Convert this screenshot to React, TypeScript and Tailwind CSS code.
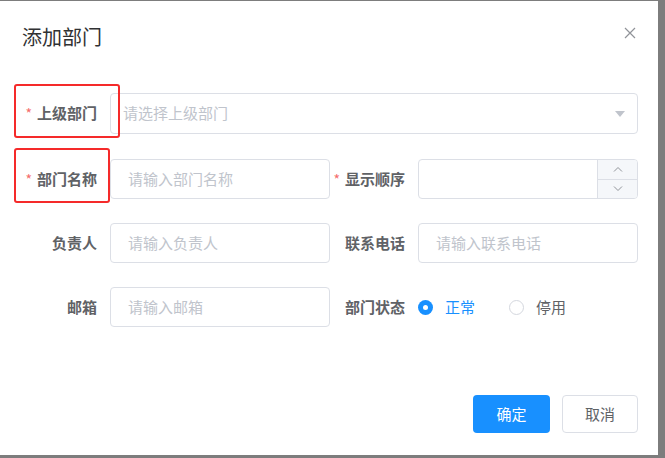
import React from 'react'

const font = { fontFamily: '"Noto Sans CJK SC", "Noto Sans", sans-serif' }

type LabelProps = {
  text: string
  required?: boolean
  className?: string
}

const Label = ({ text, required, className }: LabelProps) => (
  <div className={`flex items-center justify-end pr-[13px] text-[15px] font-bold text-[#606266] ${className ?? ''}`}>
    {required && <span className="mr-[5px] text-[14px] font-normal text-[#f56c6c]">*</span>}
    {text}
  </div>
)

const TextInput = ({ placeholder }: { placeholder: string }) => (
  <div className="flex h-[40px] w-[220px] items-center rounded-[4px] border border-[#dcdfe6] bg-white pl-[17px] text-[15px] text-[#c0c4cc]">
    {placeholder}
  </div>
)

const Radio = ({ label, checked }: { label: string; checked?: boolean }) => (
  <div className="flex items-center">
    {checked ? (
      <span className="flex h-[15px] w-[15px] items-center justify-center rounded-full bg-[#1890ff]">
        <span className="h-[5px] w-[5px] rounded-full bg-white" />
      </span>
    ) : (
      <span className="h-[15px] w-[15px] rounded-full border border-[#d4d7de] bg-white" />
    )}
    <span className={`ml-[12px] text-[15px] ${checked ? 'text-[#1890ff]' : 'text-[#606266]'}`}>{label}</span>
  </div>
)

export default function App() {
  return (
    <div className="h-[458px] w-[665px] overflow-hidden bg-[#7d7d7d] pt-px" style={font}>
      <div className="relative flex h-[454px] w-[658px] flex-col bg-white">
        <div className="flex h-[72px] items-center justify-between pl-[22px] pr-[22px]">
          <span className="text-[20px] text-[#303133]">添加部门</span>
          <svg width="12" height="12" viewBox="0 0 12 12" className="mb-[8px]">
            <path d="M1 1 L11 11 M11 1 L1 11" stroke="#909399" strokeWidth="1.2" fill="none" />
          </svg>
        </div>

        <div className="mt-[20px] flex flex-col">
          <div className="flex h-[41px]">
            <Label text="上级部门" required className="w-[110px]" />
            <div className="flex w-[528px] items-center justify-between rounded-[4px] border border-[#dcdfe6] pl-[12px] pr-[12px] text-[15px] text-[#c0c4cc]">
              请选择上级部门
              <svg width="10" height="6" viewBox="0 0 10 6">
                <path d="M0 0 L10 0 L5 6 Z" fill="#c0c4cc" />
              </svg>
            </div>
          </div>

          <div className="mt-[25px] flex h-[40px]">
            <Label text="部门名称" required className="w-[110px]" />
            <TextInput placeholder="请输入部门名称" />
            <Label text="显示顺序" required className="w-[88px]" />
            <div className="flex w-[220px] overflow-hidden rounded-[4px] border border-[#dcdfe6]">
              <div className="flex-1" />
              <div className="flex w-[40px] flex-col border-l border-[#dcdfe6] bg-[#f5f7fa]">
                <div className="flex flex-1 items-center justify-center border-b border-[#dcdfe6]">
                  <svg width="10" height="6" viewBox="0 0 10 6">
                    <path d="M1 5.5 L5 1.5 L9 5.5" stroke="#909399" strokeWidth="1" fill="none" />
                  </svg>
                </div>
                <div className="flex flex-1 items-center justify-center">
                  <svg width="10" height="6" viewBox="0 0 10 6">
                    <path d="M1 0.5 L5 4.5 L9 0.5" stroke="#909399" strokeWidth="1" fill="none" />
                  </svg>
                </div>
              </div>
            </div>
          </div>

          <div className="mt-[24px] flex h-[40px]">
            <Label text="负责人" className="w-[110px]" />
            <TextInput placeholder="请输入负责人" />
            <Label text="联系电话" className="w-[88px]" />
            <TextInput placeholder="请输入联系电话" />
          </div>

          <div className="mt-[24px] flex h-[40px]">
            <Label text="邮箱" className="w-[110px]" />
            <TextInput placeholder="请输入邮箱" />
            <Label text="部门状态" className="w-[88px]" />
            <div className="flex items-center gap-[34px]">
              <Radio label="正常" checked />
              <Radio label="停用" />
            </div>
          </div>
        </div>

        <div className="mt-auto flex justify-end gap-[12px] pb-[22px] pr-[20px]">
          <button className="h-[38px] w-[77px] rounded-[4px] bg-[#1890ff] text-[15px] text-white">确定</button>
          <button className="h-[38px] w-[76px] rounded-[4px] border border-[#dcdfe6] bg-white text-[15px] text-[#606266]">取消</button>
        </div>

        <div className="absolute left-[14px] top-[83px] h-[54px] w-[106px] rounded-[3px] border-2 border-[#f52a2a]" />
        <div className="absolute left-[14px] top-[147px] h-[55px] w-[96px] rounded-[3px] border-2 border-[#f52a2a]" />
      </div>
    </div>
  )
}
